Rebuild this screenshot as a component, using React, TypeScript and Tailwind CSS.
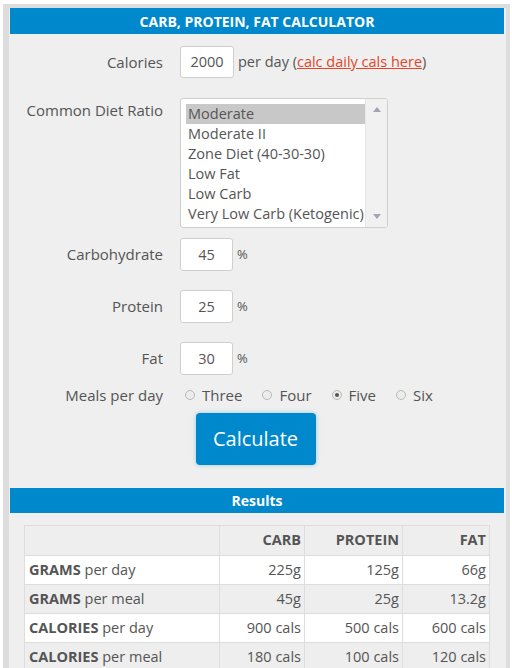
import React from 'react';

const font = { fontFamily: '"Open Sans", "Liberation Sans", sans-serif' };

const dietOptions = [
  'Moderate',
  'Moderate II',
  'Zone Diet (40-30-30)',
  'Low Fat',
  'Low Carb',
  'Very Low Carb (Ketogenic)',
];

const meals = ['Three', 'Four', 'Five', 'Six'];

const rows = [
  { bold: 'GRAMS', rest: 'per day', vals: ['225g', '125g', '66g'], shade: false },
  { bold: 'GRAMS', rest: 'per meal', vals: ['45g', '25g', '13.2g'], shade: true },
  { bold: 'CALORIES', rest: 'per day', vals: ['900 cals', '500 cals', '600 cals'], shade: false },
  { bold: 'CALORIES', rest: 'per meal', vals: ['180 cals', '100 cals', '120 cals'], shade: true },
];

const NumBox = ({ value }: { value: string }) => (
  <div className="w-[53px] h-[33px] bg-white border border-[#cfcfcf] rounded-[3px] flex items-center justify-center text-[14.5px] text-[#555]">
    {value}
  </div>
);

const PctRow = ({ label, value, mt }: { label: string; value: string; mt: string }) => (
  <div className={`flex items-center ${mt}`}>
    <div className="w-[163px] text-right text-[15px] text-[#555]">{label}</div>
    <div className="ml-[17px]">
      <NumBox value={value} />
    </div>
    <span className="ml-[4px] text-[13px] text-[#555]">%</span>
  </div>
);

export default function App() {
  return (
    <div className="w-[512px] h-[668px] bg-white overflow-hidden" style={font}>
      <div className="ml-[3px] mt-[4px] w-[507px] h-[664px] border-l-[6px] border-t-[4px] border-r-[4px] border-[#dddddd] bg-[#eeefee] pl-[1px] pr-[2px]">
        {/* Header */}
        <div className="h-[26px] bg-[#0088cc] text-white font-bold text-[14px] flex items-center justify-center">
          CARB, PROTEIN, FAT CALCULATOR
        </div>

        {/* Calories */}
        <div className="flex items-center mt-[12px]">
          <div className="w-[153px] text-right text-[15px] text-[#555]">Calories</div>
          <div className="ml-[17px]">
            <div className="w-[54px] h-[32px] bg-white border border-[#cfcfcf] rounded-[3px] flex items-center justify-center text-[14.5px] text-[#555]">
              2000
            </div>
          </div>
          <span className="ml-[4px] text-[14.5px] text-[#555]">
            per day (<span className="text-[#e2452a] underline">calc daily cals here</span>)
          </span>
        </div>

        {/* Diet ratio */}
        <div className="flex items-start mt-[20px]">
          <div className="w-[153px] text-right text-[15px] text-[#555] pt-[1px]">Common Diet Ratio</div>
          <div className="ml-[17px] w-[208px] h-[130px] bg-white border border-[#cfcfcf] rounded-[3px] flex overflow-hidden">
            <div className="flex-1 pt-[5px] pl-[5px]">
              {dietOptions.map((o, i) => (
                <div
                  key={o}
                  className={`h-[20px] leading-[20px] pl-[2px] text-[14.5px] text-[#555] whitespace-nowrap ${i === 0 ? 'bg-[#c8c8c8]' : ''}`}
                >
                  {o}
                </div>
              ))}
            </div>
            <div className="w-[22px] bg-[#f1f1f1] border-l border-[#e6e6e6] flex flex-col items-center justify-between py-[8px]">
              <svg width="8" height="5" viewBox="0 0 8 5"><path d="M4 0 L8 5 L0 5 Z" fill="#a3a3b8" /></svg>
              <svg width="8" height="5" viewBox="0 0 8 5"><path d="M0 0 L8 0 L4 5 Z" fill="#a3a3b8" /></svg>
            </div>
          </div>
        </div>

        {/* Percentages */}
        <div className="-ml-[10px]">
          <PctRow label="Carbohydrate" value="45" mt="mt-[10px]" />
          <PctRow label="Protein" value="25" mt="mt-[19px]" />
          <PctRow label="Fat" value="30" mt="mt-[19px]" />
        </div>

        {/* Meals */}
        <div className="flex items-center mt-[9px] -ml-[10px]">
          <div className="w-[163px] text-right text-[15px] text-[#555]">Meals per day</div>
          <div className="flex items-center ml-[22px] text-[15px] text-[#555]">
            {meals.map((m, i) => (
              <div key={m} className="flex items-center mr-[20px]">
                <span className="w-[10px] h-[10px] rounded-full border border-[#b9b9b9] bg-[#ececec] flex items-center justify-center">
                  {i === 2 && <span className="w-[4px] h-[4px] rounded-full bg-[#555]" />}
                </span>
                <span className="ml-[7px]">{m}</span>
              </div>
            ))}
          </div>
        </div>

        {/* Button */}
        <div className="flex justify-center mt-[6px] -ml-[3px]">
          <div className="w-[120px] h-[52px] bg-[#0088cc] rounded-[4px] shadow-[0_0_4px_rgba(0,136,204,0.35)] text-white text-[20px] flex items-center justify-center">
            Calculate
          </div>
        </div>

        {/* Results */}
        <div className="mt-[23px] h-[25px] bg-[#0088cc] text-white font-bold text-[14px] flex items-center justify-center">
          Results
        </div>

        <div className="mt-[12px] ml-[14px]">
          <table className="w-[466px] border-collapse text-[14.5px] text-[#555]">
            <thead>
              <tr className="bg-[#eeeeee] h-[30px]">
                <th className="w-[195px] border border-[#dddddd]"></th>
                <th className="w-[85px] border border-[#dddddd] text-right pr-[3px] font-bold">CARB</th>
                <th className="w-[98px] border border-[#dddddd] text-right pr-[3px] font-bold">PROTEIN</th>
                <th className="border border-[#dddddd] text-right pr-[3px] font-bold">FAT</th>
              </tr>
            </thead>
            <tbody>
              {rows.map((r, i) => (
                <tr key={i} className={`h-[29px] ${r.shade ? 'bg-[#eeeeee]' : 'bg-white'}`}>
                  <td className="border border-[#dddddd] pl-[4px]">
                    <span className="font-bold">{r.bold}</span> {r.rest}
                  </td>
                  {r.vals.map((v, j) => (
                    <td key={j} className="border border-[#dddddd] text-right pr-[3px]">{v}</td>
                  ))}
                </tr>
              ))}
            </tbody>
          </table>
        </div>
      </div>
    </div>
  );
}
